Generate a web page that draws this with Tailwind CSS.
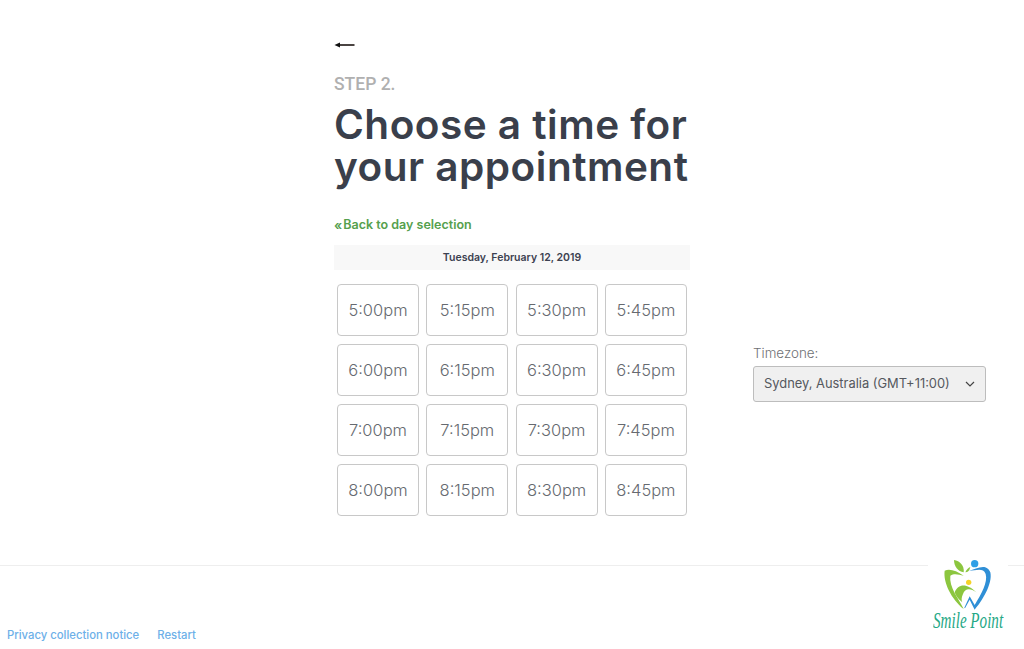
<!DOCTYPE html>
<html lang="en">
<head>
  <meta charset="UTF-8" />
  <meta name="viewport" content="width=device-width, initial-scale=1.0"/>
  <title>Choose a time</title>
  <script src="https://cdn.jsdelivr.net/npm/@tailwindcss/browser@4"></script>
</head>
<body class="bg-white h-[649px] overflow-hidden relative font-['Inter',sans-serif]">

  <div class="flex h-[565px]">
    <!-- Main column -->
    <div class="ml-[334px] w-[356px] pt-[39px]">
      <svg class="block w-[21px] h-[12px]" viewBox="0 0 21 12" fill="none">
        <path d="M4 6h16.5" stroke="#2a2320" stroke-width="1.7"/>
        <path d="M0.5 6L6 3.5v5z" fill="#111"/>
      </svg>

      <p class="mt-[18px] text-[17.5px] leading-[30px] font-medium text-[#b0b0b0] font-['Roboto',sans-serif]">STEP 2.</p>

      <h1 class="mt-[5px] text-[40.5px] leading-[42px] font-semibold text-[#3a3f4b] tracking-[0.5px] whitespace-nowrap">Choose a time for<br>your appointment</h1>

      <a href="#" class="mt-[27px] flex items-center h-[20px] text-[12.5px] font-semibold text-[#55a04d] whitespace-nowrap"><span class="mr-[1px] text-[13px] leading-none">«</span>Back to day selection</a>

      <div class="mt-[10px] h-[25px] bg-[#f8f8f8] flex items-center justify-center text-[10.5px] font-semibold text-[#3c4150]">Tuesday, February 12, 2019</div>

      <!-- Time slots -->
      <div class="mt-[14px] ml-[3px] w-[350px] grid grid-cols-[82px_82px_82px_82px] gap-x-[7.3px] gap-y-[8px] text-[16.5px] text-[#666a70] font-light">
        <button class="h-[52px] border border-[#c8c8c8] rounded-[4px]">5:00pm</button>
        <button class="h-[52px] border border-[#c8c8c8] rounded-[4px]">5:15pm</button>
        <button class="h-[52px] border border-[#c8c8c8] rounded-[4px]">5:30pm</button>
        <button class="h-[52px] border border-[#c8c8c8] rounded-[4px]">5:45pm</button>
        <button class="h-[52px] border border-[#c8c8c8] rounded-[4px]">6:00pm</button>
        <button class="h-[52px] border border-[#c8c8c8] rounded-[4px]">6:15pm</button>
        <button class="h-[52px] border border-[#c8c8c8] rounded-[4px]">6:30pm</button>
        <button class="h-[52px] border border-[#c8c8c8] rounded-[4px]">6:45pm</button>
        <button class="h-[52px] border border-[#c8c8c8] rounded-[4px]">7:00pm</button>
        <button class="h-[52px] border border-[#c8c8c8] rounded-[4px]">7:15pm</button>
        <button class="h-[52px] border border-[#c8c8c8] rounded-[4px]">7:30pm</button>
        <button class="h-[52px] border border-[#c8c8c8] rounded-[4px]">7:45pm</button>
        <button class="h-[52px] border border-[#c8c8c8] rounded-[4px]">8:00pm</button>
        <button class="h-[52px] border border-[#c8c8c8] rounded-[4px]">8:15pm</button>
        <button class="h-[52px] border border-[#c8c8c8] rounded-[4px]">8:30pm</button>
        <button class="h-[52px] border border-[#c8c8c8] rounded-[4px]">8:45pm</button>
      </div>
    </div>

    <!-- Timezone -->
    <div class="ml-[63px] w-[233px] pt-[344px]">
      <label class="block text-[13.4px] leading-[18px] font-light text-[#6f7175]">Timezone:</label>
      <div class="mt-[4px] h-[36px] bg-[#f0f0f0] border border-[#bdbdbd] rounded-[3px] flex items-center justify-between pl-[10px] pr-[10px] text-[12.9px] text-[#55585e] whitespace-nowrap">
        <span>Sydney, Australia (GMT+11:00)</span>
        <svg class="w-[10px] h-[6px]" viewBox="0 0 10 6" fill="none"><path d="M1 1l4 4 4-4" stroke="#444" stroke-width="1.2"/></svg>
      </div>
    </div>
  </div>

  <!-- Footer -->
  <div class="border-t border-[#eeeeee] h-[84px] pl-[7px] pt-[60px] flex gap-[18px] text-[11.3px] leading-[18px] font-medium text-[#6db0e8]">
    <a href="#">Privacy collection notice</a>
    <a href="#">Restart</a>
  </div>

  <!-- Logo sits over the footer line -->
  <div class="absolute left-[928px] top-[558px] w-[80px] h-[76px] bg-white">
    <svg class="absolute left-[15px] top-[1px] w-[50px] h-[55px]" viewBox="0 0 150 165" fill="none">
      <path d="M5 35C0 70 25 120 62 150C45 115 18 85 22 50C35 42 48 48 62 50C40 35 20 28 5 35Z" fill="#8cc63f"/>
      <path d="M78 35C100 30 130 10 142 40C150 75 115 130 95 152L80 122L66 148L64 146L80 112L95 138C115 105 135 70 128 45C120 25 100 35 78 35Z" fill="#2f8fd6"/>
      <path d="M35 100C45 75 70 70 100 100C80 85 65 90 60 105C55 115 55 125 58 130C45 120 38 110 35 100Z" fill="#8cc63f"/>
      <circle cx="77" cy="70" r="8" fill="#f5d327"/>
      <circle cx="95" cy="14" r="11" fill="#2f9fe6"/>
      <path d="M33 3C50 5 65 20 62 40C45 38 33 22 33 3Z" fill="#8cc63f"/>
      <path d="M67 40C70 32 76 26 82 24C80 34 75 40 67 40Z" fill="#8cc63f"/>
    </svg>
    <span class="absolute left-[5px] top-[48px] origin-left scale-x-[0.63] text-[24px] leading-[28px] italic text-[#25a886] whitespace-nowrap font-['Liberation_Serif',serif]">Smile Point</span>
  </div>

</body>
</html>
